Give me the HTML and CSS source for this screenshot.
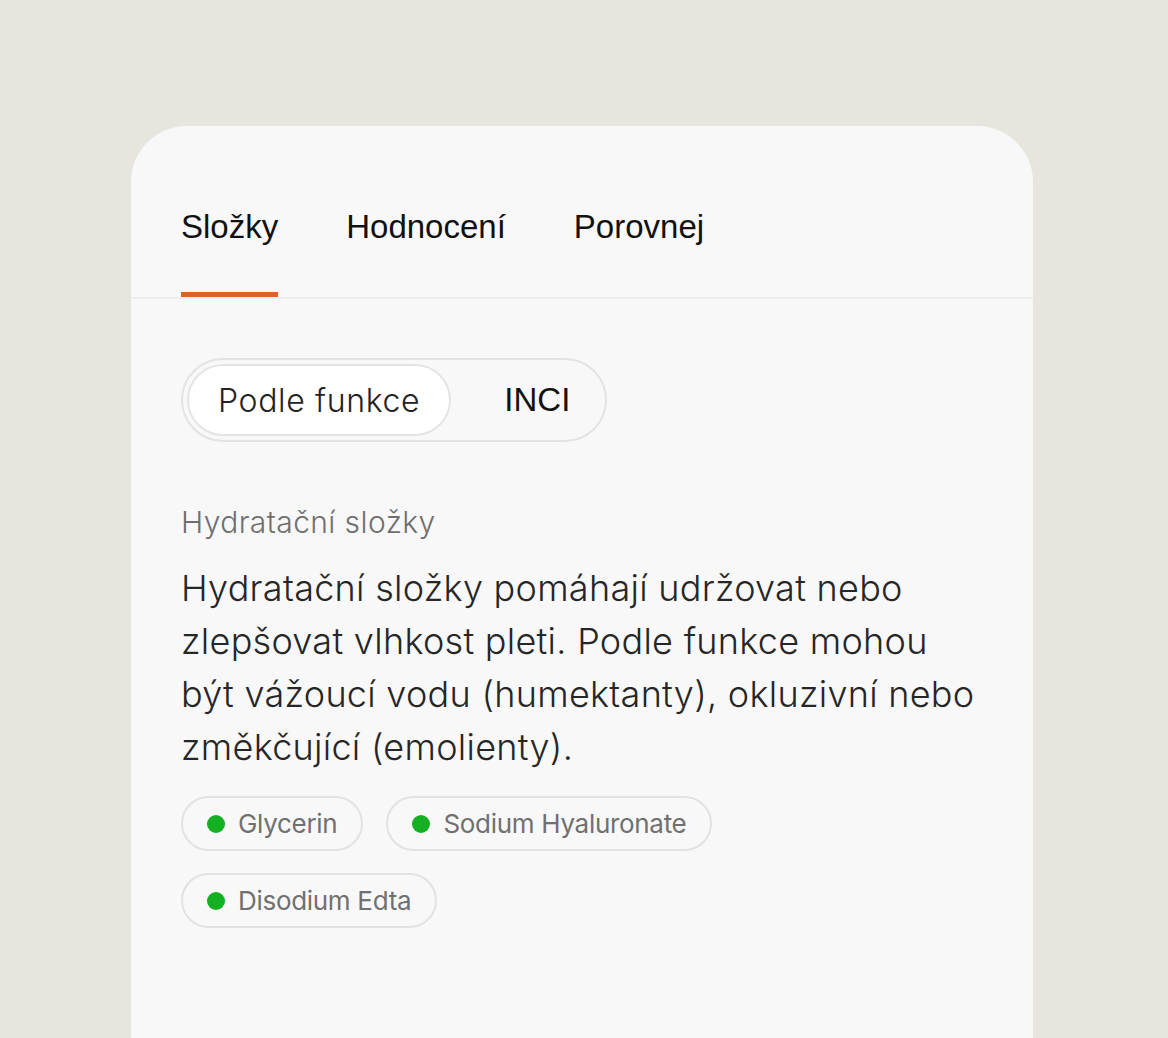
FILE: index.html
```html
<!DOCTYPE html>
<html lang="cs">
<head>
<meta charset="utf-8">
<link rel="stylesheet" href="styles.css">
</head>
<body>
<div class="page">
  <div class="card">
    <nav class="tabs">
      <div class="tab active">Složky</div>
      <div class="tab">Hodnocení</div>
      <div class="tab">Porovnej</div>
    </nav>
    <div class="content">
      <div class="segmented">
        <div class="seg seg-active">Podle funkce</div>
        <div class="seg seg-inci">INCI</div>
      </div>
      <div class="section-title">Hydratační složky</div>
      <p class="desc">Hydratační složky pomáhají udržovat nebo zlepšovat vlhkost pleti. Podle funkce mohou být vážoucí vodu (humektanty), okluzivní nebo změkčující (emolienty).</p>
      <div class="chips">
        <span class="chip"><span class="dot"></span>Glycerin</span>
        <span class="chip"><span class="dot"></span>Sodium Hyaluronate</span>
        <span class="chip"><span class="dot"></span>Disodium Edta</span>
      </div>
    </div>
  </div>
</div>
</body>
</html>
```
FILE: styles.css
```css
* { box-sizing: border-box; }
html, body { margin: 0; padding: 0; }
body {
  background: #e6e6df;
  width: 1168px;
  height: 1038px;
  overflow: hidden;
  font-family: Inter, "Noto Sans", sans-serif;
}
.page {
  padding: 126px 135px 0 131px;
}
.card {
  background: #f8f8f8;
  border-radius: 56px 56px 0 0;
  height: 912px;
  width: 902px;
}
.tabs {
  display: flex;
  gap: 68px;
  padding: 0 50px;
  border-bottom: 2px solid #ededed;
  padding-top: 81px;
}
.tab {
  font-family: "Liberation Sans", Arial, sans-serif;
  font-size: 33px;
  line-height: 40px;
  color: #111;
  padding-bottom: 45px;
  border-bottom: 5px solid transparent;
}
.tab.active {
  border-bottom-color: #d6672c;
}
.content {
  padding: 59px 50px 0;
}
.segmented {
  display: inline-flex;
  gap: 22px;
  padding: 4px;
  border: 2px solid #e3e3e3;
  border-radius: 42px;
}
.seg {
  height: 72px;
  padding: 0 29px;
  border: 2px solid transparent;
  border-radius: 36px;
  display: flex;
  align-items: center;
  font-size: 32px;
  font-weight: 300;
  letter-spacing: 0.65px;
  color: #222;
}
.seg-active {
  background: #fff;
  border-color: #e4e4e4;
}
.seg-inci {
  font-family: "Liberation Sans", Arial, sans-serif;
  font-weight: 400;
  font-size: 33px;
  letter-spacing: 0;
  color: #111;
}
.section-title {
  margin-top: 62px;
  font-size: 30px;
  font-weight: 300;
  line-height: 36px;
  letter-spacing: 0.4px;
  color: #6f6f6f;
}
.desc {
  margin: 22px 0 0;
  font-size: 36px;
  font-weight: 300;
  line-height: 53px;
  letter-spacing: 0.28px;
  color: #262626;
  width: 800px;
}
.chips {
  display: flex;
  flex-wrap: wrap;
  gap: 22px 23px;
  margin-top: 22px;
  width: 700px;
}
.chip {
  display: inline-flex;
  align-items: center;
  height: 55px;
  padding: 0 24px;
  border: 2px solid #e2e2e2;
  border-radius: 28px;
  font-size: 26px;
  letter-spacing: -0.3px;
  color: #707070;
}
.dot {
  width: 18px;
  height: 18px;
  border-radius: 50%;
  background: #12b022;
  margin-right: 13px;
}
```
